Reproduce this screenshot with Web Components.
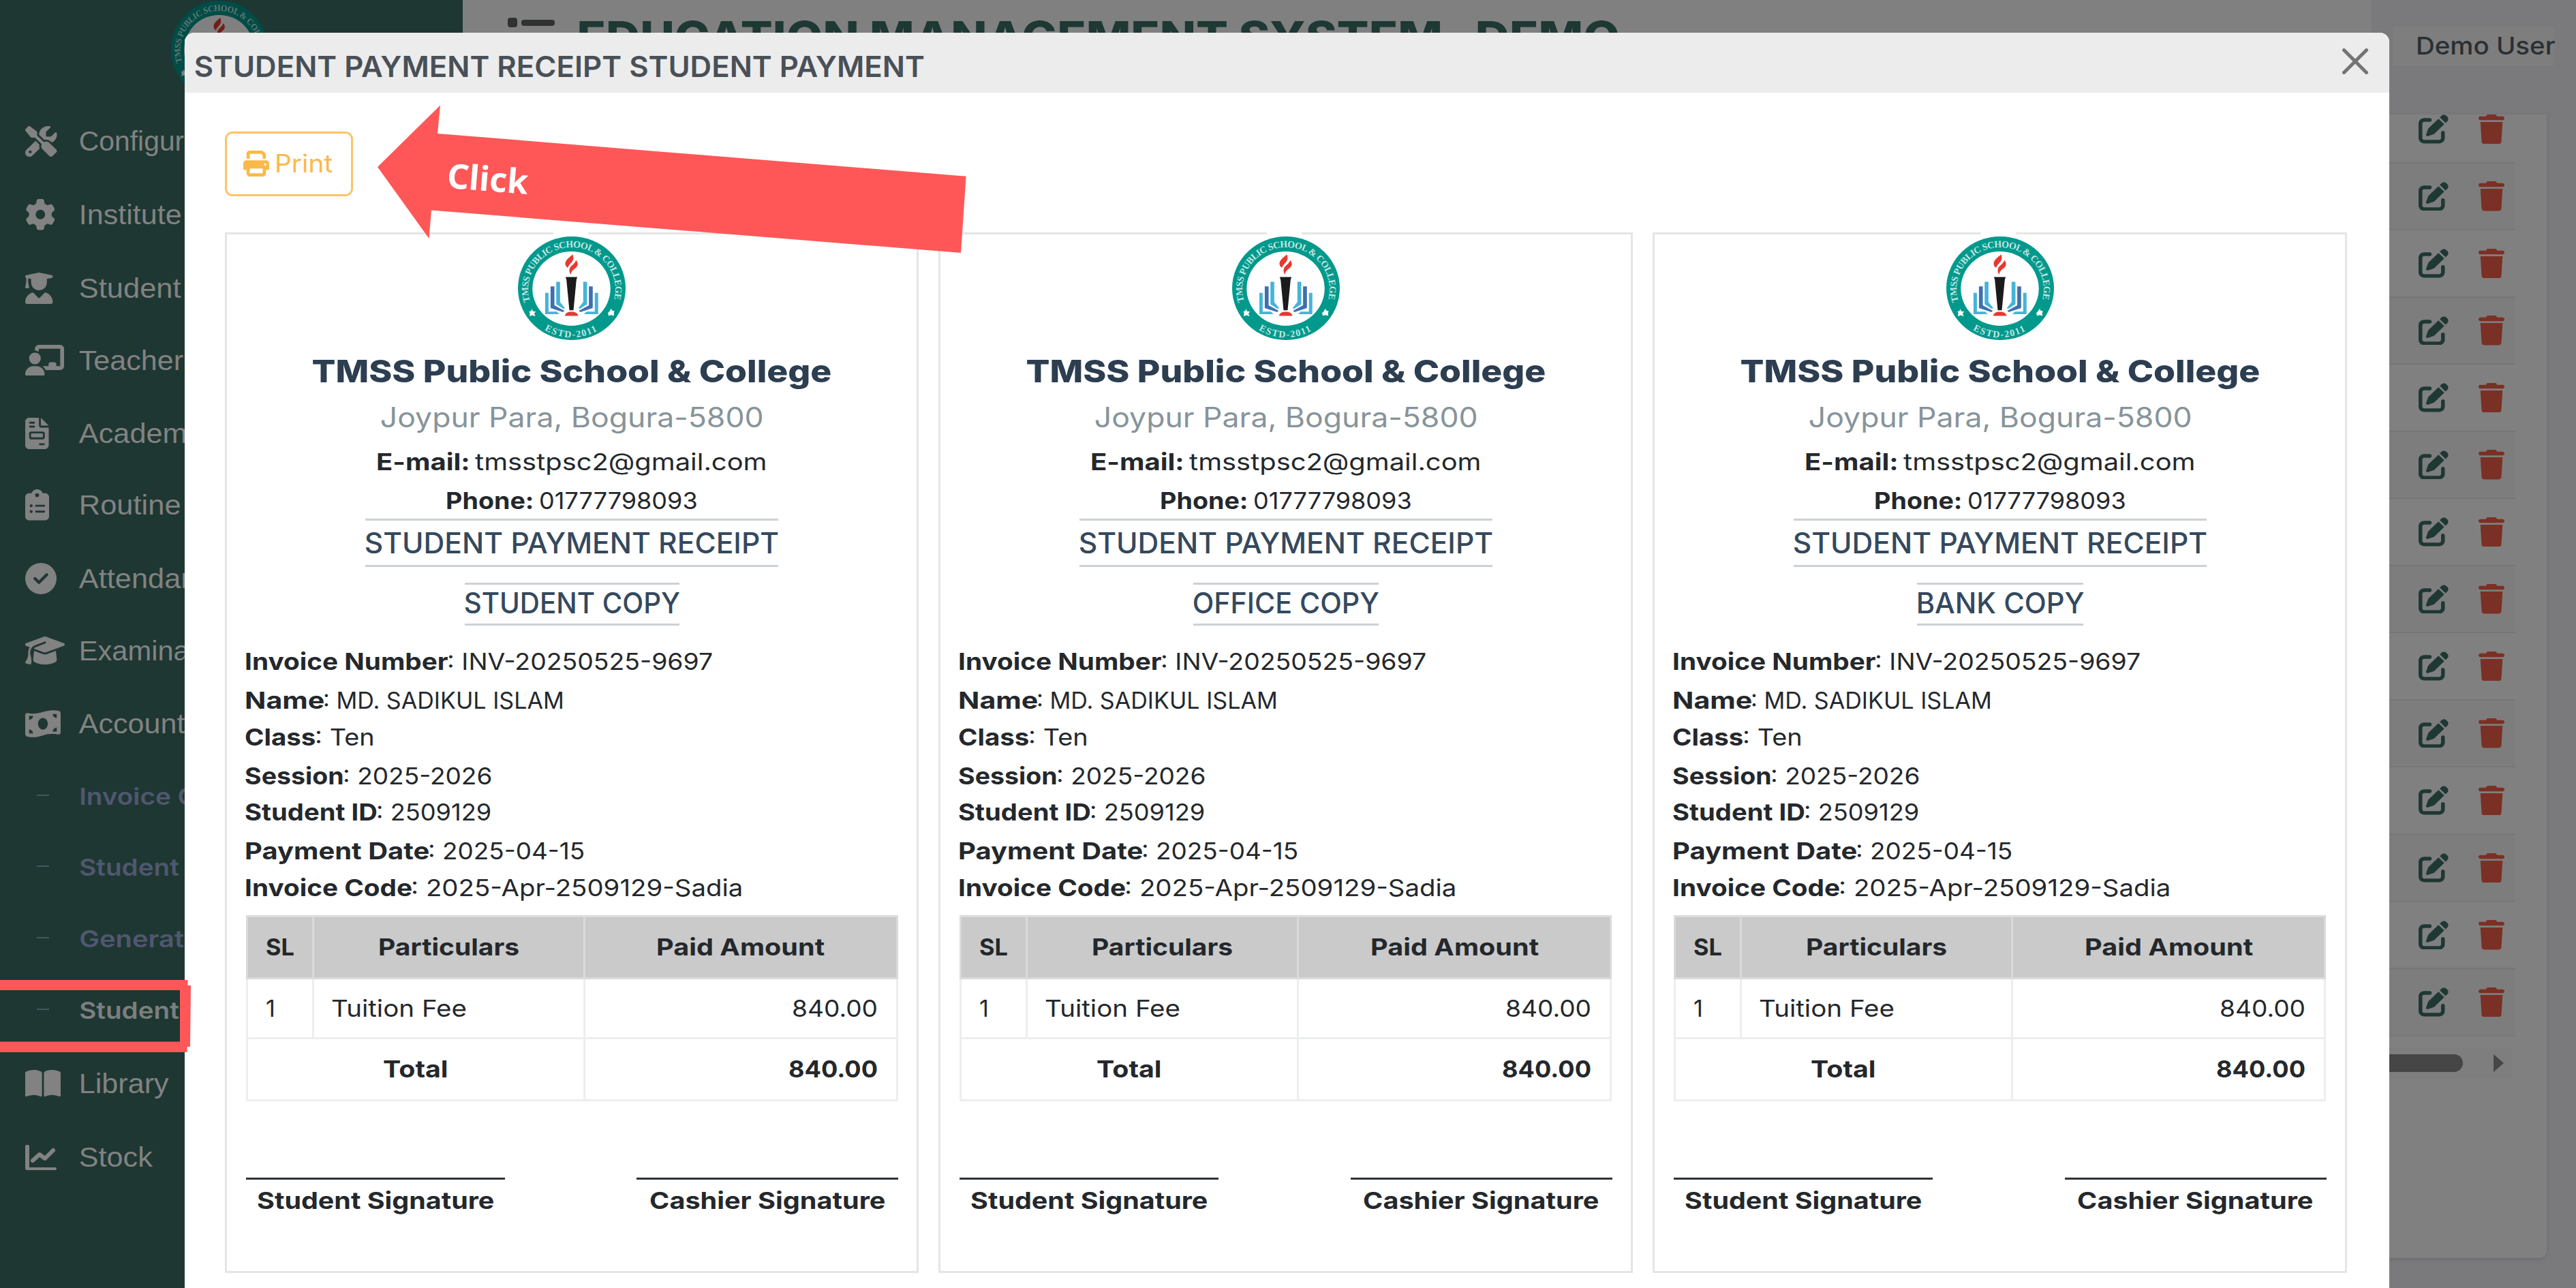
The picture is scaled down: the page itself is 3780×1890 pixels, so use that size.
<!DOCTYPE html>
<html lang="en">
<head>
<meta charset="utf-8">
<title>Education Management System</title>
<style>
html,body{margin:0;padding:0}
body{width:3780px;height:1890px;overflow:hidden;background:#7a7a7c;font-family:Inter,"Open Sans",sans-serif;color:#212529}
</style>
</head>
<body>
<ems-app></ems-app>
<script>
const define=(name,html,setup)=>customElements.define(name,class extends HTMLElement{
  connectedCallback(){
    if(this.shadowRoot)return;
    const r=this.attachShadow({mode:'open'});
    r.innerHTML=typeof html==='function'?html(this):html;
    if(setup)setup(this,r);
  }
});

/* Text stretched horizontally so that its ink fills a given width */
define('fit-text',`<style>:host{display:inline-block;white-space:pre;text-align:left}span{display:inline-block;transform-origin:0 50%}</style><span><slot></slot></span>`,(el,r)=>{
  const s=r.querySelector('span'),w=+el.getAttribute('w');
  const pad=parseFloat(getComputedStyle(el).fontSize)*.055;
  const n=s.offsetWidth||w;
  el.style.width=w+'px';
  s.style.transform=`translateX(${-pad}px) scaleX(${(w+2*pad)/n})`;
});

const ICONS={
tools:['0 0 512 512','<path d="M78.6 5C69.1-2.4 55.6-1.5 47 7L7 47c-8.5 8.5-9.4 22-2.1 31.6l80 104c4.5 5.9 11.6 9.4 19 9.4h54.1l109 109c-14.7 29-10 65.4 14.3 89.6l112 112c12.5 12.5 32.8 12.5 45.3 0l64-64c12.5-12.5 12.5-32.8 0-45.3l-112-112c-24.2-24.2-60.6-29-89.6-14.3l-109-109V104c0-7.5-3.5-14.5-9.4-19L78.6 5zM19.9 396.1C7.2 408.8 0 426.1 0 444.1C0 481.6 30.4 512 67.9 512c18 0 35.3-7.2 48-19.9L233.7 374.3c-7.8-20.9-9-43.6-3.6-65.1l-61.7-61.7L19.9 396.1zM512 144c0-10.5-1.1-20.7-3.2-30.5c-2.4-11.2-16.1-14.1-24.2-6l-63.9 63.9c-3 3-7.1 4.7-11.3 4.7H352c-8.8 0-16-7.2-16-16V102.6c0-4.2 1.7-8.3 4.7-11.3l63.9-63.9c8.1-8.1 5.2-21.8-6-24.2C388.7 1.1 378.5 0 368 0C288.5 0 224 64.5 224 144l0 .8 85.3 85.3c36-9.1 75.8 .5 104 28.7L429 274.5c49-23 83-72.8 83-130.5zM56 432a24 24 0 1 1 48 0 24 24 0 1 1 -48 0z"/>'],
gear:['0 0 512 512','<path d="M495.9 166.6c3.2 8.7 .5 18.4-6.4 24.6l-43.3 39.4c1.1 8.3 1.7 16.8 1.7 25.4s-.6 17.1-1.7 25.4l43.3 39.4c6.9 6.2 9.6 15.9 6.4 24.6c-4.4 11.9-9.7 23.3-15.8 34.3l-4.7 8.1c-6.6 11-14 21.4-22.1 31.2c-5.9 7.2-15.7 9.6-24.5 6.8l-55.7-17.7c-13.4 10.3-28.2 18.9-44 25.4l-12.5 57.1c-2 9.1-9 16.3-18.2 17.8c-13.8 2.3-28 3.5-42.5 3.5s-28.7-1.2-42.5-3.5c-9.2-1.5-16.2-8.7-18.2-17.8l-12.5-57.1c-15.8-6.5-30.6-15.1-44-25.4L83.1 425.9c-8.8 2.8-18.6 .3-24.5-6.8c-8.1-9.8-15.5-20.2-22.1-31.2l-4.7-8.1c-6.1-11-11.4-22.4-15.8-34.3c-3.2-8.7-.5-18.4 6.4-24.6l43.3-39.4C64.6 273.1 64 264.6 64 256s.6-17.1 1.7-25.4L22.4 191.2c-6.9-6.2-9.6-15.9-6.4-24.6c4.4-11.9 9.7-23.3 15.8-34.3l4.7-8.1c6.6-11 14-21.4 22.1-31.2c5.9-7.2 15.7-9.6 24.5-6.8l55.7 17.7c13.4-10.3 28.2-18.9 44-25.4l12.5-57.1c2-9.1 9-16.3 18.2-17.8C227.3 1.2 241.5 0 256 0s28.7 1.2 42.5 3.5c9.2 1.5 16.2 8.7 18.2 17.8l12.5 57.1c15.8 6.5 30.6 15.1 44 25.4l55.7-17.7c8.8-2.8 18.6-.3 24.5 6.8c8.1 9.8 15.5 20.2 22.1 31.2l4.7 8.1c6.1 11 11.4 22.4 15.8 34.3zM256 336a80 80 0 1 0 0-160 80 80 0 1 0 0 160z"/>'],
student:['0 0 448 512','<path d="M219.3 .5c3.1-.6 6.3-.6 9.4 0l200 40C439.9 42.7 448 52.6 448 64s-8.1 21.3-19.3 23.5L352 102.9V160c0 70.7-57.3 128-128 128S96 230.7 96 160V102.9L48 93.3v65.1l15.7 78.4c.9 4.7-.3 9.6-3.3 13.3s-7.6 5.9-12.4 5.9H16c-4.8 0-9.3-2.1-12.4-5.9s-4.3-8.6-3.3-13.3L16 158.4V86.6C6.5 83.3 0 74.3 0 64C0 52.6 8.1 42.7 19.3 40.5l200-40zM111.9 327.7c10.5-3.4 21.8 .4 29.4 8.5l71 75.5c6.3 6.7 17 6.7 23.3 0l71-75.5c7.6-8.1 18.9-11.9 29.4-8.5C401 348.6 448 409.4 448 481.3c0 17-13.8 30.7-30.7 30.7H30.7C13.8 512 0 498.2 0 481.3c0-71.9 47-132.7 111.9-153.6z"/>'],
teacher:['0 0 640 512','<path d="M160 64c0-35.3 28.7-64 64-64H576c35.3 0 64 28.7 64 64V352c0 35.3-28.7 64-64 64H336.8c-11.8-25.5-29.9-47.5-52.4-64H384V320c0-17.7 14.3-32 32-32h64c17.7 0 32 14.3 32 32v32h64V64L224 64v49.1C205.2 102.2 183.3 96 160 96V64zm0 64a96 96 0 1 1 0 192 96 96 0 1 1 0-192zM133.3 352h53.3C260.3 352 320 411.7 320 485.3c0 14.7-11.9 26.7-26.7 26.7H26.7C11.9 512 0 500.1 0 485.3C0 411.7 59.7 352 133.3 352z"/>'],
file:['0 0 384 512','<path d="M64 0C28.7 0 0 28.7 0 64V448c0 35.3 28.7 64 64 64H320c35.3 0 64-28.7 64-64V160H256c-17.7 0-32-14.3-32-32V0H64zM256 0V128H384L256 0zM80 64h64c8.8 0 16 7.2 16 16s-7.2 16-16 16H80c-8.8 0-16-7.2-16-16s7.2-16 16-16zm0 64h64c8.8 0 16 7.2 16 16s-7.2 16-16 16H80c-8.8 0-16-7.2-16-16s7.2-16 16-16zm16 96H288c17.7 0 32 14.3 32 32v64c0 17.7-14.3 32-32 32H96c-17.7 0-32-14.3-32-32V256c0-17.7 14.3-32 32-32zm0 32v64H288V256H96zM240 416h64c8.8 0 16 7.2 16 16s-7.2 16-16 16H240c-8.8 0-16-7.2-16-16s7.2-16 16-16z"/>'],
clipboard:['0 0 384 512','<path d="M192 0c-41.8 0-77.4 26.7-90.5 64H64C28.7 64 0 92.7 0 128V448c0 35.3 28.7 64 64 64H320c35.3 0 64-28.7 64-64V128c0-35.3-28.7-64-64-64H282.5C269.4 26.7 233.8 0 192 0zm0 64a32 32 0 1 1 0 64 32 32 0 1 1 0-64zM72 272a24 24 0 1 1 48 0 24 24 0 1 1 -48 0zm104-16H304c8.8 0 16 7.2 16 16s-7.2 16-16 16H176c-8.8 0-16-7.2-16-16s7.2-16 16-16zM72 368a24 24 0 1 1 48 0 24 24 0 1 1 -48 0zm88 0c0-8.8 7.2-16 16-16H304c8.8 0 16 7.2 16 16s-7.2 16-16 16H176c-8.8 0-16-7.2-16-16z"/>'],
check:['0 0 512 512','<path fill-rule="evenodd" d="M256 512A256 256 0 1 0 256 0a256 256 0 1 0 0 512zM369 209L241 337c-9.4 9.4-24.6 9.4-33.9 0l-64-64c-9.4-9.4-9.4-24.6 0-33.9s24.6-9.4 33.9 0l47 47L335 175c9.4-9.4 24.6-9.4 33.9 0s9.4 24.6 0 33.9z"/>'],
cap:['0 32 640 448','<path d="M320 32c-8.1 0-16.1 1.4-23.7 4.1L15.8 137.4C6.3 140.9 0 149.9 0 160s6.3 19.1 15.8 22.6l57.9 20.9C57.3 229.3 48 259.8 48 291.9v28.1c0 28.4-10.8 57.7-22.3 80.8c-6.5 13-13.9 25.8-22.5 37.6C0 442.7-.9 448.3 .9 453.4s6 8.9 11.2 10.2l64 16c4.2 1.1 8.7 .3 12.4-2s6.3-6.1 7.1-10.4c8.6-42.8 4.3-81.2-2.1-108.7C90.3 344.3 86 329.8 80 316.5V291.9c0-30.2 10.2-58.7 27.9-81.5c12.9-15.5 29.6-28 49.2-35.7l157-61.7c8.2-3.2 17.5 .8 20.7 9s-.8 17.5-9 20.7l-157 61.7c-12.4 4.9-23.3 12.4-32.2 21.6l159.6 57.6c7.6 2.7 15.6 4.1 23.7 4.1s16.1-1.4 23.7-4.1L624.2 182.6c9.5-3.4 15.8-12.5 15.8-22.6s-6.3-19.1-15.8-22.6L343.7 36.1C336.1 33.4 328.1 32 320 32zM128 408c0 35.3 86 72 192 72s192-36.7 192-72L496.7 262.6 354.5 314c-11.1 4-22.8 6-34.5 6s-23.5-2-34.5-6L143.3 262.6 128 408z"/>'],
money:['0 32 576 448','<path fill-rule="evenodd" d="M0 112C0 88 20 74 42 80C112 98 200 90 288 64C380 36 450 24 540 44C562 49 576 66 576 88V400C576 424 556 438 534 432C464 414 376 422 288 448C196 476 126 488 36 468C14 463 0 446 0 424ZM288 352C332 352 368 309 368 256S332 160 288 160S208 203 208 256S244 352 288 352ZM64 416H128C128 381 99 352 64 352ZM128 128H64V192C99 192 128 163 128 128ZM512 320C477 320 448 349 448 384H512ZM448 96C448 131 477 160 512 160V96Z"/>'],
book:['0 32 576 440','<path d="M249.6 471.5c10.8 3.8 22.4-4.1 22.4-15.5V78.6c0-4.2-1.6-8.4-5-11C247.4 52 202.4 32 144 32C93.5 32 46.3 45.3 18.1 56.1C6.8 60.5 0 71.7 0 83.8V454.1c0 11.9 12.8 20.2 24.1 16.5C55.6 460.1 105.5 448 144 448c33.9 0 79 14 105.6 23.5zm76.8 0C353 462 398.1 448 432 448c38.5 0 88.4 12.1 119.9 22.6c11.3 3.8 24.1-4.6 24.1-16.5V83.8c0-12.1-6.8-23.3-18.1-27.6C529.7 45.3 482.5 32 432 32c-58.4 0-103.4 20-123 35.6c-3.3 2.6-5 6.8-5 11V456c0 11.4 11.7 19.3 22.4 15.5z"/>'],
chart:['0 0 46 37','<path d="M0 2Q0 0 2 0H4Q6 0 6 2V33H44Q46 33 46 35T44 37H3Q0 37 0 34Z"/><path d="M11 23L21 14L29 20L41 8" fill="none" stroke="currentColor" stroke-width="6" stroke-linecap="round" stroke-linejoin="round"/>'],
print:['0 0 512 512','<path d="M128 0C92.7 0 64 28.7 64 64v96h64V64H354.7L384 93.3V160h64V93.3c0-17-6.7-33.3-18.7-45.3L400 18.7C388 6.7 371.7 0 354.7 0H128zM384 352v32 64H128V384 368 352H384zm64 32h32c17.7 0 32-14.3 32-32V256c0-35.3-28.7-64-64-64H64c-35.3 0-64 28.7-64 64v96c0 17.7 14.3 32 32 32H64v64c0 35.3 28.7 64 64 64H384c35.3 0 64-28.7 64-64V384zM432 248a24 24 0 1 1 0 48 24 24 0 1 1 0-48z"/>'],
edit:['0 0 512 512','<path d="M471.6 21.7c-21.9-21.9-57.3-21.9-79.2 0L362.3 51.7l97.9 97.9 30.1-30.1c21.9-21.9 21.9-57.3 0-79.2L471.6 21.7zm-299.2 220c-6.1 6.1-10.8 13.6-13.5 21.9l-29.6 88.8c-2.9 8.6-.6 18.1 5.8 24.6s15.9 8.7 24.6 5.8l88.8-29.6c8.2-2.7 15.7-7.4 21.9-13.5L437.7 172.3 339.7 74.3 172.4 241.7zM96 64C43 64 0 107 0 160V416c0 53 43 96 96 96H352c53 0 96-43 96-96V320c0-17.7-14.3-32-32-32s-32 14.3-32 32v96c0 17.7-14.3 32-32 32H96c-17.7 0-32-14.3-32-32V160c0-17.7 14.3-32 32-32h96c17.7 0 32-14.3 32-32s-14.3-32-32-32H96z"/>'],
trash:['0 0 448 512','<path d="M135.2 17.7L128 32H32C14.3 32 0 46.3 0 64S14.3 96 32 96H416c17.7 0 32-14.3 32-32s-14.3-32-32-32H320l-7.2-14.3C307.4 6.8 296.3 0 284.2 0H163.8c-12.1 0-23.2 6.8-28.6 17.7zM416 128H32L53.2 467c1.6 25.3 22.6 45 47.9 45H346.9c25.3 0 46.3-19.7 47.9-45L416 128z"/>'],
close:['0 0 38 38','<path d="M2.5 2.5L35.5 35.5M35.5 2.5L2.5 35.5" fill="none" stroke="currentColor" stroke-width="5" stroke-linecap="round"/>'],
list:['0 0 69 64','<rect x="0" y="0" width="14" height="14" rx="4"/><rect x="20" y="3" width="49" height="9" rx="4"/><rect x="0" y="24" width="14" height="14" rx="4"/><rect x="20" y="27" width="49" height="9" rx="4"/><rect x="0" y="48" width="14" height="14" rx="4"/><rect x="20" y="51" width="49" height="9" rx="4"/>'],
play:['0 0 15 26','<path d="M0 0L15 13L0 26Z"/>']
};
define('ui-icon',el=>{const [v,p]=ICONS[el.getAttribute('name')];
return `<style>:host{display:block;flex:none;width:${el.getAttribute('w')}px;height:${el.getAttribute('h')}px}svg{display:block;width:100%;height:100%}</style><svg viewBox="${v}" preserveAspectRatio="none" fill="currentColor">${p}</svg>`});

define('school-logo',`<style>:host{display:block;width:158px;height:152px}svg{display:block;width:100%;height:100%}text{font:bold 42px "Liberation Serif",serif;fill:#c4e6e3}</style>
<svg viewBox="57 20 475 455" preserveAspectRatio="none">
<ellipse cx="294.5" cy="247.5" rx="237.5" ry="227.5" fill="#00998c"/>
<ellipse cx="293" cy="249" rx="172" ry="163" fill="#fff"/>
<path id="t" d="M111 306A192 184 0 1 1 478 306" fill="none"/>
<path id="b" d="M174 430A222 213 0 0 0 414 430" fill="none"/>
<text textLength="690"><textPath href="#t" textLength="690">TMSS PUBLIC SCHOOL &amp; COLLEGE</textPath></text>
<text textLength="244"><textPath href="#b" textLength="244">ESTD-2011</textPath></text>
<path d="M118 338l6 11 12 0-7 9 5 13-13-5-13 4 2-13-4-8 9-1zM468 337l-6 11-8 8 3 13 11-4 13 4-1-13 3-9-9-1z" fill="#fff"/>
<path d="M299 99C280 114 264 126 266 142C267 150 272 154 277 158C282 141 301 133 302 116C302 109 301 104 299 99Z" fill="#e53a32"/>
<path d="M313 124C322 134 324 145 315 155C306 165 291 170 291 187C283 179 282 167 287 157C293 146 309 140 313 124Z" fill="#e53a32"/>
<path d="M267 198H319L315 210L302 344H284L271 210Z" fill="#1b1b1b"/>
<path d="M264 369C266 356 277 351 293 351S321 356 323 369Z" fill="#e53a32"/>
<g id="w"><path d="M177 268H192V350H228L240 361H177Z" fill="#45b4d6"/><path d="M201 239H218V322L262 346L256 352L201 334Z" fill="#3f6fae"/><path d="M226 219H243V308L264 334L258 338L226 318Z" fill="#45b4d6"/></g>
<use href="#w" transform="translate(588 0) scale(-1 1)"/>
</svg>`);

/* Sidebar entry: icon, or a dash for a sub entry */
define('nav-item',el=>{const a=n=>el.getAttribute(n),sub=el.hasAttribute('sub');
return `<style>:host{display:flex;height:${a('h')}px;flex:none;color:#828282}
.i{width:81px;height:44px;display:flex;align-items:center;flex:none}
.i i{width:18px;height:2px;background:#46565e;margin:0 0 2px 17px}
fit-text{font:${sub?'600 34px/46px Inter':'400 41px/44px "Liberation Sans"'},sans-serif;color:${sub&&!el.hasAttribute('active')?'#50576f':sub?'#7b7f7f':'#828282'}}</style>
<div class="i">${sub?'<i></i>':`<ui-icon name="${a('icon')}" w="${a('iw')}" h="${a('ih')}"></ui-icon>`}</div><fit-text w="${a('w')}">${a('label')}</fit-text>`});

const NAV=[['Configur',150,108,'tools',46.5,45],['Institute',147,108,'gear',44.5,45.5],['Student',145,105.5,'student',40.5,46],['Teacher',149,107.5,'teacher',57,45.5],['Academ',154,105,'file',34.5,46],['Routine',145,108,'clipboard',35,45.5],['Attendan',169,105.5,'check',46,46],['Examina',158,107.5,'cap',58,41],['Account',151,105.5,'money',52,40],['Invoice C',169,104.8],['Student',143,104.8],['Generat',150,104.8],['Student',143,108],['Library',127,108.5,'book',52,39],['Stock',104,100,'chart',46,37]];
define('side-bar',`<style>:host{display:block;width:679px;height:1890px;background:#1e3732;flex:none;overflow:hidden}
school-logo{width:142px;height:144px;margin:1px 0 0 251px;filter:brightness(.5)}
nav{display:flex;flex-direction:column;padding:40px 0 0 37px}</style>
<school-logo></school-logo><nav>${NAV.map((n,i)=>`<nav-item label="${n[0]}" w="${n[1]}" h="${n[2]}" ${n[3]?`icon="${n[3]}" iw="${n[4]}" ih="${n[5]}"`:'sub'} ${i==12?'active':''}></nav-item>`).join('')}</nav>`);

define('top-bar',`<style>:host{display:flex;height:168px}
.l{flex:1;background:#808080;display:flex;padding:26px 0 0 66px;gap:36px;color:#2f3133}
.l fit-text{font-size:63px;font-weight:800;line-height:46px;color:#1e3833;margin-top:5px}
.r{width:300px;box-sizing:border-box;padding:40px 0 0 32px}
.u{background:#7e7e7e;width:201px;height:57px;padding-left:35px;font-size:36px;font-weight:500;line-height:55px;color:#2b2f33}</style>
<div class="l"><ui-icon name="list" w="69" h="64"></ui-icon><fit-text w="1523">EDUCATION MANAGEMENT SYSTEM -DEMO</fit-text></div>
<div class="r"><div class="u"><fit-text w="201">Demo User</fit-text></div></div>`);

define('row-actions',`<style>:host{display:flex;justify-content:flex-end;align-items:center;height:98.55px;box-sizing:border-box;padding-right:16px;gap:44px;border-bottom:2.5px solid #757777;color:#1e3833}
:host(:nth-child(even)){background:#7d7d7d}ui-icon+ui-icon{color:#7a3024}</style>
<ui-icon name="edit" w="44" h="42.5"></ui-icon><ui-icon name="trash" w="38" h="43.5"></ui-icon>`);

define('list-card',`<style>:host{display:block;height:1678px;margin-right:43px;background:#808080;border-radius:0 0 11px 11px;box-shadow:0 2px 5px #6c6c6e;overflow:hidden}
.rows{margin:-27px 46px 0 0}
.sb{display:flex;align-items:center;justify-content:flex-end;gap:45px;margin:17px 50px 0 0;height:44px;background:#7e7e7e;padding-right:13px;color:#464646}
.sb i{width:1200px;height:26px;border-radius:13px;background:#464646}</style>
<div class="rows">${'<row-actions></row-actions>'.repeat(14)}</div><div class="sb"><i></i><ui-icon name="play" w="15" h="26"></ui-icon></div>`);

const INFO=[['Invoice Number',295,': INV-20250525-9697',386],['Name',113,': MD. SADIKUL ISLAM',350],['Class',101,': Ten',84],['Session',142,': 2025-2026',215],['Student ID',191,': 2509129',165],['Payment Date',267,': 2025-04-15',226],['Invoice Code',242,': 2025-Apr-2509129-Sadia',483]];
define('receipt-card',el=>`<style>:host{display:block;position:relative;box-sizing:border-box;height:1527px;border:3px solid #e5e5e5;padding:3px 27px 0 28px;background:#fff;font-size:34.5px;color:#24282c}
.gap{position:absolute;left:479px;top:-3px;width:51px;height:6px;background:#fff}
.head{display:flex;flex-direction:column;align-items:center}
b{font-weight:700}
.n{font-size:45.5px;font-weight:800;line-height:60px;color:#2c3e50;margin-top:16px}
.a{font-size:40.5px;line-height:50px;color:#87949a;margin-top:13px}
.c{display:flex;gap:11px;line-height:57px;height:55px}
.e{margin-top:12px;line-height:56px;height:56px}
.t{font-size:42px;font-weight:500;color:#34495e;border:solid #ccd1d5;border-width:3.5px 0;box-sizing:border-box;height:71px;line-height:65px;padding:0 1px}
.k{margin-top:23px;height:63px;line-height:54px;margin-bottom:25px}
.info{line-height:55px;height:400px}
.info div{height:53.6px;display:flex;gap:2px}.info div:nth-child(odd){height:57px}
table{border-collapse:collapse;width:957px;table-layout:fixed;line-height:40px}
td,th{border:3px solid #eceeef;padding:0 29px;height:88px;box-sizing:border-box;font-weight:400;text-align:left}
th{background:#cacaca;height:91px;text-align:center;font-weight:700;padding:0;border-color:#dadada}
.r{text-align:right}.tot td{height:91px;font-weight:700}.tot td:first-child{text-align:center}
.sig{display:flex;justify-content:space-between;margin-top:112px}
.sig div{width:380px;border-top:3.5px solid #303336;text-align:center;font-weight:700;line-height:62px}.sig div+div{width:384px}</style>
<div class="gap"></div>
<div class="head"><school-logo></school-logo>
<fit-text class="n" w="758">TMSS Public School &amp; College</fit-text>
<fit-text class="a" w="558">Joypur Para, Bogura-5800</fit-text>
<div class="c e"><b><fit-text w="134">E-mail:</fit-text></b><fit-text w="425">tmsstpsc2@gmail.com</fit-text></div>
<div class="c"><b><fit-text w="126">Phone:</fit-text></b><fit-text w="229">01777798093</fit-text></div>
<div class="t"><fit-text w="604">STUDENT PAYMENT RECEIPT</fit-text></div>
<div class="t k"><fit-text w="${el.getAttribute('copy-width')}">${el.getAttribute('copy')}</fit-text></div></div>
<div class="info">${INFO.map(r=>`<div><b><fit-text w="${r[1]}">${r[0]}</fit-text></b><fit-text w="${r[3]}">${r[2]}</fit-text></div>`).join('')}</div>
<table><colgroup><col style="width:97px"><col style="width:398px"><col></colgroup>
<tr><th><fit-text w="38">SL</fit-text></th><th><fit-text w="203">Particulars</fit-text></th><th><fit-text w="243">Paid Amount</fit-text></th></tr>
<tr><td style="padding:0 0 0 28px"><fit-text w="10">1</fit-text></td><td style="padding-left:27px"><fit-text w="195">Tuition Fee</fit-text></td><td class="r"><fit-text w="122">840.00</fit-text></td></tr>
<tr class="tot"><td colspan="2"><fit-text w="92">Total</fit-text></td><td class="r"><fit-text w="127">840.00</fit-text></td></tr></table>
<div class="sig"><div><fit-text w="344">Student Signature</fit-text></div><div><fit-text w="343">Cashier Signature</fit-text></div></div>`);

define('print-button',`<style>:host{display:flex;box-sizing:border-box;width:188px;height:95px;border:3px solid #fcc468;border-radius:11px;align-items:center;padding-left:24px;gap:10px;color:#fbb94a;font-size:37px;line-height:44px}</style><ui-icon name="print" w="38" h="38"></ui-icon><fit-text w="81">Print</fit-text>`);

define('modal-dialog',`<style>:host{display:block;position:absolute;left:270.5px;top:48px;width:3235.5px;height:1842px;background:#fff;border-radius:14px 14px 0 0;overflow:hidden}
header{height:88px;background:#ececec;display:flex;justify-content:space-between;padding:0 31px 0 16px}
header fit-text{font-size:42.5px;font-weight:600;line-height:100px;color:#495057}
header ui-icon{color:#747474;margin-top:23px}
main{padding:56.5px 0 0 59px}
.cards{display:grid;grid-template-columns:repeat(3,1018.5px);gap:29.25px;margin-top:53.5px}</style>
<header><fit-text w="1067">STUDENT PAYMENT RECEIPT STUDENT PAYMENT</fit-text><ui-icon name="close" w="38" h="38"></ui-icon></header>
<main><print-button></print-button><div class="cards">
<receipt-card copy="STUDENT COPY" copy-width="313"></receipt-card>
<receipt-card copy="OFFICE COPY" copy-width="270"></receipt-card>
<receipt-card copy="BANK COPY" copy-width="242"></receipt-card></div></main>`);

/* Callout arrow and highlight frame, laid over the page */
define('callout-arrow',`<style>:host{display:block;position:absolute;left:554px;top:154px;width:864px;height:218px}svg{display:block}text{font:700 50px "Noto Sans",sans-serif;fill:#fff}</style>
<svg width="864" height="218"><path d="M0 91L92 .5L88 42L863.6 104.7L856 217L79 154.5L75.5 196Z" fill="#ff5757"/><text transform="translate(101 121.5) rotate(4.6)" textLength="119" lengthAdjust="spacingAndGlyphs">Click</text></svg>`);
define('highlight-frame',`<style>:host{display:block;position:absolute;left:0;top:1438px;width:280px;height:106px}svg{display:block}</style>
<svg width="280" height="106" fill="#ff5757"><path d="M0 0H275.5V8H280L279 98H274.5V106H0V90.5H264V15H0Z"/></svg>`);

define('ems-app',`<style>:host{display:flex;position:relative;width:3780px;height:1890px;overflow:hidden;background:#7a7a7c}.m{flex:1;min-width:0}</style>
<side-bar></side-bar><div class="m"><top-bar></top-bar><list-card></list-card></div>
<modal-dialog></modal-dialog><highlight-frame></highlight-frame><callout-arrow></callout-arrow>`);
</script>
</body>
</html>
